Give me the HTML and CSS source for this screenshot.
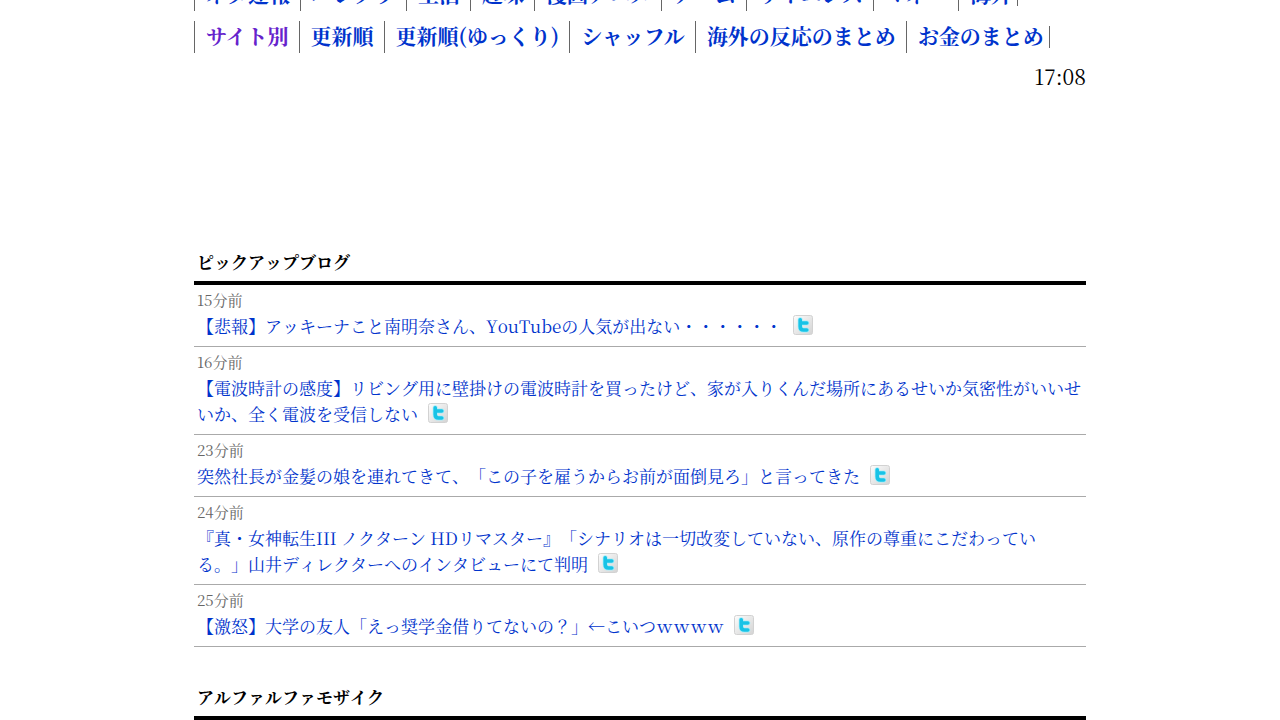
FILE: index.html
```
<!DOCTYPE html>
<html lang="ja">
<head>
    <meta charset="UTF-8">
    <meta name="viewport" content="width=device-width, initial-scale=1.0">
    <title>まとめサイトアンテナ</title>
    <link rel="stylesheet" href="styles.css">
</head>
<body>

<svg class="sprite" aria-hidden="true">
    <defs>
        <linearGradient id="tile" x1="0" y1="0" x2="1" y2="1">
            <stop offset="0" stop-color="#fdfdfd"/>
            <stop offset="1" stop-color="#d3d3d3"/>
        </linearGradient>
        <symbol id="twitter" viewBox="0 0 20 20">
            <rect x="0.5" y="0.5" width="19" height="19" rx="2" fill="url(#tile)" stroke="#d2d2d2"/>
            <path d="M7.2 4.8V11.5Q7.2 15 10.5 15H13.8M7.2 8H13.8" fill="none" stroke="#a9eefa" stroke-width="5" stroke-linecap="round"/>
            <path d="M7.2 4.8V11.5Q7.2 15 10.5 15H13.8M7.2 8H13.8" fill="none" stroke="#18c3e6" stroke-width="3.6" stroke-linecap="round"/>
        </symbol>
    </defs>
</svg>

<div class="container">
    <nav class="menu">
        <ul>
            <li><a href="#">ネタ速報</a></li>
            <li><a href="#">ハンクラ</a></li>
            <li><a href="#">生活</a></li>
            <li><a href="#">趣味</a></li>
            <li><a href="#">漫画アニメ</a></li>
            <li><a href="#">ゲーム</a></li>
            <li><a href="#">サイエンス</a></li>
            <li><a href="#">マネー</a></li>
            <li><a href="#">海外</a></li>
        </ul>
        <ul class="order">
            <li><a class="visited" href="#">サイト別</a></li>
            <li><a href="#">更新順</a></li>
            <li><a href="#">更新順(ゆっくり)</a></li>
            <li><a href="#">シャッフル</a></li>
            <li><a href="#">海外の反応のまとめ</a></li>
            <li><a href="#">お金のまとめ</a></li>
        </ul>
    </nav>

    <div class="clock">17:08</div>

    <section class="blog">
        <h2>ピックアップブログ</h2>
        <ul class="entries">
            <li>
                <span class="time">15分前</span>
                <a href="#">【悲報】アッキーナこと南明奈さん、YouTubeの人気が出ない・・・・・・</a>
                <a class="tweet" href="#" aria-label="Twitter"><svg><use href="#twitter"/></svg></a>
            </li>
            <li>
                <span class="time">16分前</span>
                <a href="#">【電波時計の感度】リビング用に壁掛けの電波時計を買ったけど、家が入りくんだ場所にあるせいか気密性がいいせいか、全く電波を受信しない</a>
                <a class="tweet" href="#" aria-label="Twitter"><svg><use href="#twitter"/></svg></a>
            </li>
            <li>
                <span class="time">23分前</span>
                <a href="#">突然社長が金髪の娘を連れてきて、「この子を雇うからお前が面倒見ろ」と言ってきた</a>
                <a class="tweet" href="#" aria-label="Twitter"><svg><use href="#twitter"/></svg></a>
            </li>
            <li>
                <span class="time">24分前</span>
                <a href="#">『真・女神転生III ノクターン HDリマスター』「シナリオは一切改変していない、原作の尊重にこだわっている。」山井ディレクターへのインタビューにて判明</a>
                <a class="tweet" href="#" aria-label="Twitter"><svg><use href="#twitter"/></svg></a>
            </li>
            <li>
                <span class="time">25分前</span>
                <a href="#">【激怒】大学の友人「えっ奨学金借りてないの？」←こいつｗｗｗｗ</a>
                <a class="tweet" href="#" aria-label="Twitter"><svg><use href="#twitter"/></svg></a>
            </li>
        </ul>
    </section>

    <section class="blog">
        <h2>アルファルファモザイク</h2>
    </section>
</div>

</body>
</html>
```
FILE: styles.css
```
body {
    font-family: "Noto Serif CJK JP", "Liberation Serif", "Noto Sans CJK JP", serif;
    font-size: 17px;
    font-kerning: none;
    text-spacing-trim: space-all;
    margin: 0;
    background-color: #ffffff;
    color: #000000;
    overflow: hidden;
}
ul {
    list-style: none;
    margin: 0;
    padding: 0;
}
a {
    color: #0033cc;
    text-decoration: none;
}
a:hover {
    text-decoration: underline;
}
.sprite {
    position: absolute;
    width: 0;
    height: 0;
}
.container {
    width: 70%;
    max-width: 892px;
    margin: 0 auto;
}
.menu {
    margin-top: -21px;
    font-size: 21px;
    font-weight: bold;
}
.menu ul {
    display: flex;
    align-items: center;
    margin-bottom: 10px;
}
.menu ul::after {
    content: "";
    height: 22px;
    margin-left: 5px;
    border-right: 1px solid #666666;
}
.menu li {
    border-left: 1px solid #666666;
    line-height: 28px;
    padding: 0 10px 4px 11px;
    white-space: nowrap;
}
.menu li:last-child {
    padding-right: 0;
}
.menu .order {
    font-kerning: normal;
}
.menu .visited {
    color: #6622cc;
}
.clock {
    font-size: 21px;
    line-height: 26px;
    text-align: right;
    margin-bottom: 153px;
}
.blog {
    margin-bottom: 30px;
}
.blog h2 {
    font-size: 17px;
    line-height: 26px;
    margin: 0;
    padding: 7px 3px 6px;
    border-bottom: 4px solid #000000;
}
.entries li {
    border-bottom: 1px solid #aaaaaa;
    line-height: 26px;
    padding: 2px 3px 7px;
}
.time {
    display: block;
    color: #666666;
    font-size: 15px;
}
.tweet {
    margin-left: 6px;
}
.tweet svg {
    width: 20px;
    height: 20px;
    vertical-align: -2px;
}
```
